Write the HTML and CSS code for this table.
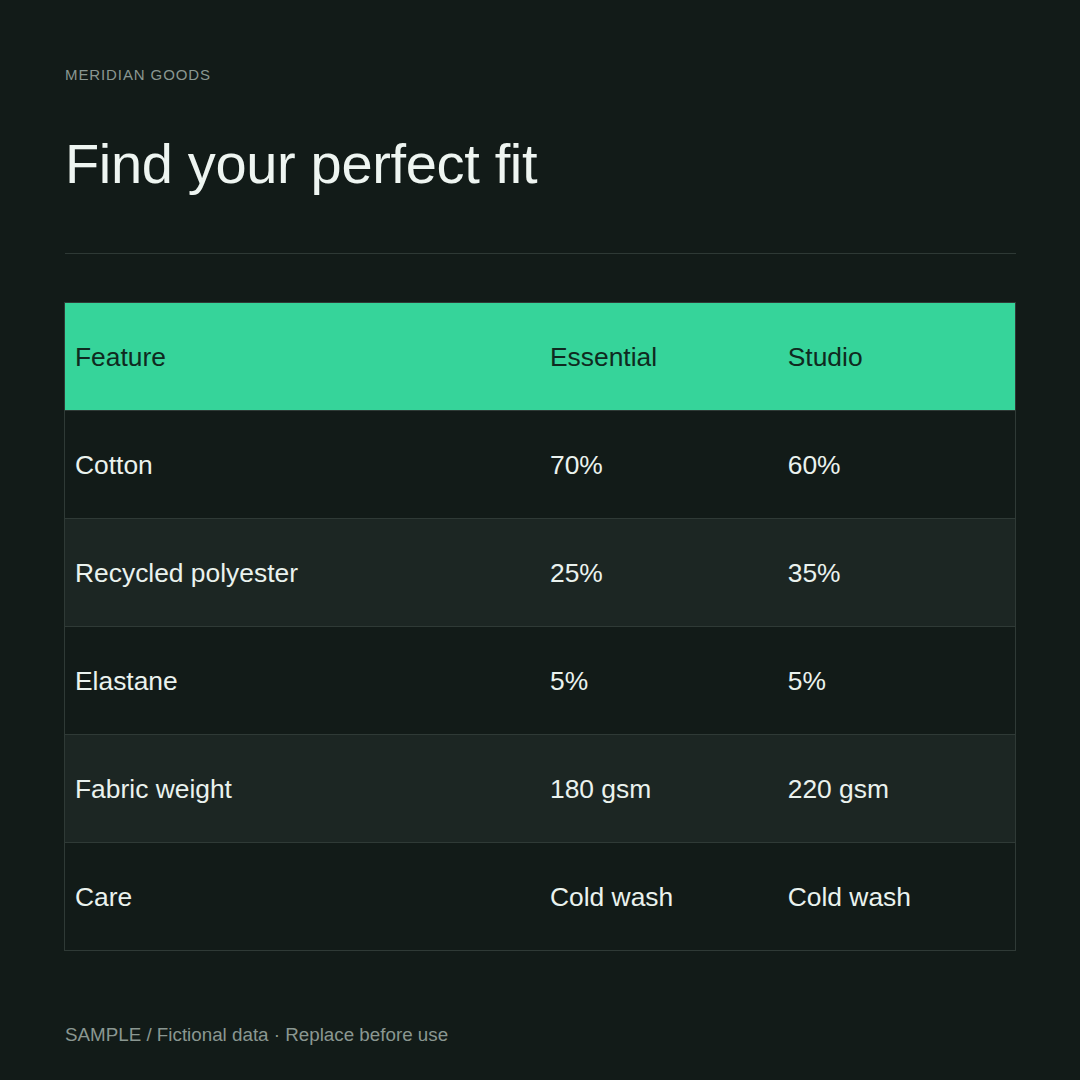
FILE: index.html
```html
<!DOCTYPE html>
<html lang="en">
<head>
<meta charset="utf-8">
<title>Find your perfect fit</title>
<link rel="stylesheet" href="styles.css">
</head>
<body>
<main class="page">
  <div class="brand">MERIDIAN GOODS</div>
  <h1 class="title">Find your perfect fit</h1>
  <hr class="divider">
  <table class="spec">
    <colgroup>
      <col class="col-feature">
      <col class="col-plan">
      <col class="col-plan">
    </colgroup>
    <thead>
      <tr><th>Feature</th><th>Essential</th><th>Studio</th></tr>
    </thead>
    <tbody>
      <tr><td>Cotton</td><td>70%</td><td>60%</td></tr>
      <tr><td>Recycled polyester</td><td>25%</td><td>35%</td></tr>
      <tr><td>Elastane</td><td>5%</td><td>5%</td></tr>
      <tr><td>Fabric weight</td><td>180 gsm</td><td>220 gsm</td></tr>
      <tr><td>Care</td><td>Cold wash</td><td>Cold wash</td></tr>
    </tbody>
  </table>
  <p class="footnote">SAMPLE / Fictional data · Replace before use</p>
</main>
</body>
</html>
```

FILE: styles.css
```css
html, body {
  margin: 0;
  padding: 0;
  background: #121b18;
}

body {
  font-family: "Liberation Sans", Arial, sans-serif;
  color: #e9f1ed;
}

.page {
  width: 1080px;
  height: 1080px;
  box-sizing: border-box;
  padding: 66px 64px 0 64px;
}

.brand {
  font-size: 15px;
  line-height: 18px;
  letter-spacing: 0.06em;
  color: #8a9791;
  padding-left: 1px;
}

.title {
  margin: 48px 0 0 0;
  font-size: 56px;
  line-height: 64px;
  font-weight: 400;
  letter-spacing: -0.34px;
  color: #eef5f1;
  padding-left: 1px;
}

.divider {
  margin: 57px 0 0 1px;
  border: 0;
  height: 1px;
  background: #2e3935;
  width: 951px;
}

.spec {
  margin-top: 48px;
  width: 952px;
  border-collapse: collapse;
  table-layout: fixed;
  border: 1px solid #2f3a36;
}

.col-feature { width: 50%; }
.col-plan { width: 25%; }

.spec th,
.spec td {
  height: 108px;
  padding: 2px 10px 0 10px;
  text-align: left;
  vertical-align: middle;
  font-size: 26.4px;
  font-weight: 400;
  box-sizing: border-box;
}

.spec th {
  background: #36d49a;
  color: #0f2a20;
}

.spec td {
  color: #eaf2ee;
  border-top: 1px solid #2f3a36;
}

.spec tbody tr:nth-child(even) td {
  background: #1c2623;
}

.spec tbody tr:nth-child(odd) td {
  background: #121b18;
}

.footnote {
  margin: 72px 0 0 1px;
  font-size: 18.8px;
  line-height: 24px;
  color: #8a9791;
}
```
